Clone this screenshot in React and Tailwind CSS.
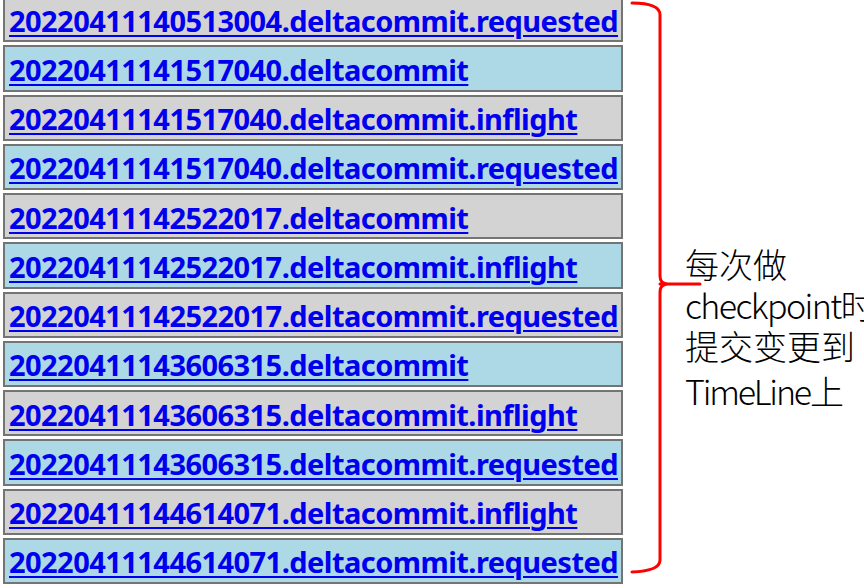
import React from "react";

const rows = [
  "20220411140513004.deltacommit.requested",
  "20220411141517040.deltacommit",
  "20220411141517040.deltacommit.inflight",
  "20220411141517040.deltacommit.requested",
  "20220411142522017.deltacommit",
  "20220411142522017.deltacommit.inflight",
  "20220411142522017.deltacommit.requested",
  "20220411143606315.deltacommit",
  "20220411143606315.deltacommit.inflight",
  "20220411143606315.deltacommit.requested",
  "20220411144614071.deltacommit.inflight",
  "20220411144614071.deltacommit.requested",
];

export default function App() {
  return (
    <div className="relative w-[864px] h-[588px] overflow-hidden bg-white flex">
      <div className="flex flex-col gap-[3px] w-[620px] ml-[3px] mt-[-4px] shrink-0">
        {rows.map((r, i) => (
          <div
            key={i}
            className={`h-[46.25px] shrink-0 border-2 border-[#747474] flex items-center pl-[4px] ${
              i % 2 === 0 ? "bg-[#d3d3d3]" : "bg-[#add8e6]"
            }`}
          >
            <a
              href="#"
              className="text-[29px] leading-none font-bold tracking-[-0.55px] text-[#0000ee] underline decoration-2 underline-offset-[3px] whitespace-nowrap pt-[2px]"
              style={{ fontFamily: '"Noto Sans", "Open Sans", sans-serif' }}
            >
              {r}
            </a>
          </div>
        ))}
      </div>
      <svg
        className="absolute left-0 top-0"
        width="864"
        height="588"
        viewBox="0 0 864 588"
        fill="none"
      >
        <path
          d="M632 3 Q660 3 660 15 L660 276 Q660 284 668 284 M700 284 L660 284 M668 284 Q660 284 660 292 L660 560 Q660 571 632 572"
          stroke="#ff0000"
          strokeWidth="3"
          strokeLinecap="round"
          fill="none"
        />
      </svg>
      <div
        className="ml-[62px] pt-[243px] text-[34px] leading-[41px] text-black whitespace-nowrap"
        style={{ fontFamily: '"Noto Sans CJK SC", "Noto Sans", sans-serif', fontWeight: 300 }}
      >
        <div>每次做</div>
        <div>
          <span className="tracking-[-1.6px]">checkpoint</span>时
        </div>
        <div>提交变更到</div>
        <div className="mt-[4px]">
          <span className="tracking-[-2.2px]">TimeLine</span>上
        </div>
      </div>
    </div>
  );
}
